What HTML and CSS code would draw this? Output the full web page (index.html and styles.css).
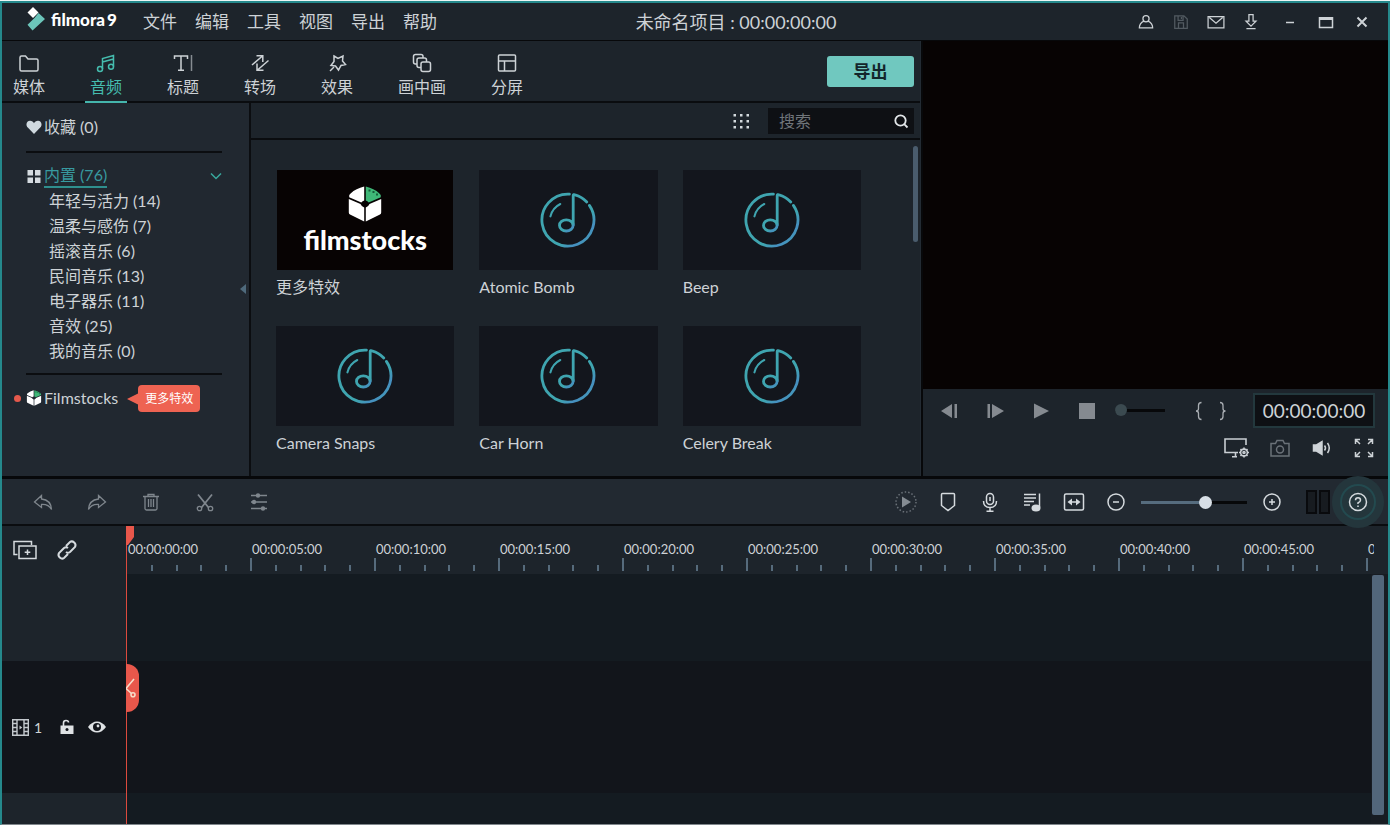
FILE: index.html
```html
<!DOCTYPE html>
<html lang="zh-CN">
<head>
<meta charset="utf-8">
<title>Filmora9</title>
<link rel="stylesheet" href="styles.css">
</head>
<body>
<svg class="sprite" aria-hidden="true">
  <defs>
    <linearGradient id="disc" x1="0" y1="0" x2="1" y2="1">
      <stop offset="0.65" stop-color="#3fa5b0"/><stop offset="0.8" stop-color="#468fc0"/><stop offset="1" stop-color="#3fa5b0"/>
    </linearGradient>
    <symbol id="note" viewBox="0 0 56 56">
      <g fill="none" stroke="url(#disc)" stroke-width="2.8" stroke-linecap="round">
        <path d="M49.4 13.4A26 26 0 1 1 29.4 2.1"/>
        <path d="M33.2 33V3.4Q33.2 2.2 35 2.9A26 26 0 0 1 46.8 10"/>
        <ellipse cx="26.3" cy="33.4" rx="6.8" ry="5.6"/>
        <path d="M20.3 12A19 19 0 0 0 10.4 24.4" stroke-width="2"/>
      </g>
    </symbol>
    <symbol id="cube" viewBox="0 0 34 36">
      <path d="M16.200.6V14.500Q14.500 15 13.300 16.500L1.200 11.300Q.6 8.600 2.600 7.400Q8 2.600 16.200.6Z" fill="#fff"/>
      <path d="M17.800.6V14.500Q19.500 15 20.700 16.500L32.800 11.300Q33.400 8.600 31.400 7.400Q26 2.600 17.800.6Z" fill="#3fb777"/>
      <path d="M20.500 3.500h2v2h-2zM24.500 5h2v2h-2zM28 7.500h2v2h-2z" fill="#155c39"/>
      <path d="M.8 13L12.500 18Q13.500 20.500 16.200 21.500V35.400L2 28.500Q.8 27.800.8 26.500ZM33.200 13L21.500 18Q20.500 20.500 17.800 21.500V35.400L32 28.500Q33.200 27.800 33.200 26.500Z" fill="#fff"/>
    </symbol>
  </defs>
</svg>

<div class="app">
  <header class="titlebar">
    <div class="brand">
      <svg width="20" height="26" viewBox="0 0 20 26"><path d="M6 1l5.500 5.500L6 12 .5 6.500z" fill="#fff"/><path d="M11.500 7l6.500 6L5.500 24.500 .5 18.800 7.500 12z" fill="#6cc5ba"/></svg>
      <span class="brand-name">filmora<span class="brand-nine">9</span></span>
    </div>
    <nav class="menu">
      <button>文件</button><button>编辑</button><button>工具</button><button>视图</button><button>导出</button><button>帮助</button>
    </nav>
    <h1 class="project">未命名项目 : 00:00:00:00</h1>
    <div class="account">
      <button aria-label="账户"><svg class="ic" viewBox="0 0 24 24"><circle cx="12" cy="8" r="3.700"/><path d="M9.500 11Q4 13.500 4 19H20Q20 13.500 14.500 11"/></svg></button>
      <button aria-label="保存" class="dim"><svg class="ic" viewBox="0 0 24 24"><path d="M4.500 4.500H15.500L19.500 8.500V19.500H4.500zM8.500 5V10H14.500V5M9 19V13H15V19M12.500 6V8.500"/></svg></button>
      <button aria-label="消息"><svg class="ic" viewBox="0 0 24 24"><path d="M2.500 5.500H21.500V19H2.500zM4 6.500l8 7 8-7"/></svg></button>
      <button aria-label="下载"><svg class="ic" viewBox="0 0 24 24"><path d="M9.500 3H14.500V11H18L12 17 6 11H9.500zM6.500 20H17.500"/></svg></button>
    </div>
    <div class="window-buttons">
      <button aria-label="最小化"><svg class="ic" viewBox="0 0 24 24"><path d="M8 12.500H16"/></svg></button>
      <button aria-label="最大化"><svg class="ic" viewBox="0 0 24 24"><path d="M5.500 7V17.500H18.500V7"/><path d="M5 8.500H19" stroke-width="3"/></svg></button>
      <button aria-label="关闭"><svg class="ic" viewBox="0 0 24 24"><path d="M7.500 7.500l9 9M16.500 7.500l-9 9" stroke-width="2"/></svg></button>
    </div>
  </header>

  <main class="workspace">
    <section class="library">
      <div class="tabs">
        <button class="tab"><svg class="ic" viewBox="0 0 24 24"><path d="M3 18V6.500Q3 5 4.500 5H8.500L11 8H19.500Q21 8 21 9.500V18.500Q21 20 19.500 20H4.500Q3 20 3 18.500z"/></svg>媒体</button>
        <button class="tab active"><svg class="ic" viewBox="0 0 24 24"><path d="M8.500 18V7.500L19.500 4.500V15.500M8.500 11L19.500 8"/><circle cx="6" cy="18" r="2.500"/><circle cx="17" cy="15.800" r="2.500"/></svg>音频</button>
        <button class="tab"><svg class="ic" viewBox="0 0 24 24"><path d="M3.500 8V5H16.500V8M10 5V19M7 19.200H13"/><path d="M20.500 4V20" opacity=".6"/></svg>标题</button>
        <button class="tab"><svg class="ic" viewBox="0 0 24 24"><path d="M4 14L14.500 5M8.500 4.800H14.800V11M20.500 9.500L9.500 19M9 12.500V19.200H15.500"/></svg>转场</button>
        <button class="tab"><svg class="ic" viewBox="0 0 24 24"><path d="M9 5l4 2.500L18 5l-.5 5 3 3.500-4.500 1-2.500 4.500-3-4-4.500-.5L9 10.500z"/><path d="M9 16l-4 4"/></svg>效果</button>
        <button class="tab"><svg class="ic" viewBox="0 0 24 24"><g fill="#1d242b"><rect x="3.500" y="3.500" width="9.500" height="9.500" rx="2"/><rect x="7" y="7" width="9.500" height="9.500" rx="2"/><rect x="11" y="11" width="9.500" height="9.500" rx="2"/></g></svg>画中画</button>
        <button class="tab"><svg class="ic" viewBox="0 0 24 24"><rect x="3.500" y="4" width="17" height="16" rx="1"/><path d="M3.500 10H20.500M9.500 10V20"/></svg>分屏</button>
        <button class="export">导出</button>
      </div>

      <div class="library-body">
        <aside class="sidebar">
          <a class="side-row favorites" href="#"><svg width="16" height="16" viewBox="0 0 16 16"><path d="M8 15L1.800 8.600C-1 5.500 1 1.800 4 1.800 6 1.800 7.300 3 8 4.200 8.700 3 10 1.800 12 1.800c3 0 5 3.700 2.200 6.800z" fill="#cfd9df"/></svg><span>收藏 (0)</span></a>
          <div class="side-group">
            <a class="side-row" href="#"><svg width="16" height="16" viewBox="0 0 16 16"><path d="M1.500 2H7v5.500H1.500zM9 2h5.500v5.500H9zM1.500 9.500H7V15H1.500zM9 9.500h5.500V15H9z" fill="#d5dbe0"/></svg><span class="current">内置 (76)</span>
            <svg class="chevron" width="12" height="8" viewBox="0 0 12 8"><path d="M1 1.500L6 6.500 11 1.500" fill="none" stroke="#38a89d" stroke-width="1.500"/></svg></a>
            <ul class="categories">
              <li><a href="#">年轻与活力 (14)</a></li>
              <li><a href="#">温柔与感伤 (7)</a></li>
              <li><a href="#">摇滚音乐 (6)</a></li>
              <li><a href="#">民间音乐 (13)</a></li>
              <li><a href="#">电子器乐 (11)</a></li>
              <li><a href="#">音效 (25)</a></li>
              <li><a href="#">我的音乐 (0)</a></li>
            </ul>
          </div>
          <a class="side-row stocks" href="#"><i class="dot"></i><svg width="16" height="16" viewBox="0 0 34 36"><use href="#cube"/></svg><span>Filmstocks</span><span class="tip">更多特效</span></a>
          <button class="collapse" aria-label="折叠"><svg width="6" height="10" viewBox="0 0 6 10"><path d="M6 0V10L0 5z" fill="#4f6a7c"/></svg></button>
        </aside>

        <div class="media">
          <div class="media-bar">
            <button aria-label="网格视图"><svg width="18" height="18" viewBox="0 0 18 18" fill="#d3d9dd"><path d="M1.500 2h2.500v2.500H1.500zM8 2h2.500v2.500H8zM14.500 2H17v2.500h-2.500zM1.500 8h2.500v2.500H1.500zM8 8h2.500v2.500H8zM14.500 8H17v2.500h-2.500zM1.500 14h2.500v2.500H1.500zM8 14h2.500v2.500H8zM14.500 14H17v2.500h-2.500z"/></svg></button>
            <label class="search"><input type="text" placeholder="搜索" aria-label="搜索"><svg width="16" height="16" viewBox="0 0 16 16" fill="none" stroke="#e3e7ea" stroke-width="1.800"><circle cx="7.500" cy="7.500" r="5.200"/><path d="M11.200 11.200L14.500 14.500"/></svg></label>
          </div>
          <div class="media-scroll">
            <div class="cards">
              <figure class="card"><div class="thumb promo"><svg width="34" height="36"><use href="#cube"/></svg><b>filmstocks</b></div><figcaption>更多特效</figcaption></figure>
              <figure class="card"><div class="thumb"><svg width="56" height="56"><use href="#note"/></svg></div><figcaption>Atomic Bomb</figcaption></figure>
              <figure class="card"><div class="thumb"><svg width="56" height="56"><use href="#note"/></svg></div><figcaption>Beep</figcaption></figure>
              <figure class="card"><div class="thumb"><svg width="56" height="56"><use href="#note"/></svg></div><figcaption>Camera Snaps</figcaption></figure>
              <figure class="card"><div class="thumb"><svg width="56" height="56"><use href="#note"/></svg></div><figcaption>Car Horn</figcaption></figure>
              <figure class="card"><div class="thumb"><svg width="56" height="56"><use href="#note"/></svg></div><figcaption>Celery Break</figcaption></figure>
            </div>
            <div class="scrollbar"></div>
          </div>
        </div>
      </div>
    </section>

    <section class="preview">
      <div class="screen"></div>
      <div class="controls">
        <div class="transport">
          <button aria-label="上一帧"><svg class="solid" viewBox="0 0 24 24"><path d="M15 5V19L4 12zM17.500 5H20V19H17.500z"/></svg></button>
          <button aria-label="下一帧"><svg class="solid" viewBox="0 0 24 24"><path d="M9 5V19L21 12zM4.500 5H7V19H4.500z"/></svg></button>
          <button aria-label="播放"><svg class="solid" viewBox="0 0 24 24"><path d="M5 4.500V19.500L20 12z"/></svg></button>
          <button aria-label="停止"><svg class="solid" viewBox="0 0 24 24"><path d="M4 4H20V20H4z"/></svg></button>
          <input class="seek" type="range" min="0" max="100" value="0" aria-label="播放位置">
          <div class="marks">
            <button aria-label="标记入点"><svg class="ic mark" viewBox="0 0 24 24"><path d="M14.500 3.500Q11.500 3.500 11.500 6.500V9.500Q11.500 12 9 12Q11.500 12 11.500 14.500V17.500Q11.500 20.500 14.500 20.500"/></svg></button>
            <button aria-label="标记出点"><svg class="ic mark" viewBox="0 0 24 24"><path d="M9 3.500Q12 3.500 12 6.500V9.500Q12 12 14.500 12Q12 12 12 14.500V17.500Q12 20.500 9 20.500"/></svg></button>
          </div>
          <output class="timecode">00:00:00:00</output>
        </div>
        <div class="view-tools">
          <button aria-label="预览质量"><svg width="26" height="24" viewBox="0 0 26 24" fill="none" stroke="#c9ced3" stroke-width="1.600"><path d="M22 9V3H1V16.500H14M11.500 16.500V20.500M8 20.700H13"/><circle cx="20" cy="16.500" r="3.400"/><circle cx="20" cy="16.500" r="1"/><path d="M20 11.500V13M20 20V21.500M15 16.500H16.500M23.500 16.500H25M16.500 13l1 1M22.500 19l1 1M23.500 13l-1 1M17.500 19l-1 1"/></svg></button>
          <button aria-label="快照" class="muted"><svg class="ic" viewBox="0 0 24 24"><path d="M3 7.500H7.500L9 4.500H15L16.500 7.500H21V20H3z"/><circle cx="12" cy="13.500" r="3.500"/></svg></button>
          <button aria-label="音量"><svg class="ic" viewBox="0 0 24 24"><path d="M3.500 9H6.500L12 5.500V18.500L6.500 15H3.500z" fill="#cfd4d8"/><path d="M14.500 9.500Q16.500 12 14.500 14.500M17.500 7Q21 12 17.500 17"/></svg></button>
          <button aria-label="全屏"><svg class="ic" viewBox="0 0 24 24"><path d="M8 3.500H3.500V8M4 4l4 4M16 3.500H20.500V8M20 4l-4 4M8 20.500H3.500V16M4 20l4-4M16 20.500H20.500V16M20 20l-4-4"/></svg></button>
        </div>
      </div>
    </section>
  </main>

  <div class="toolbar">
    <div class="edit-tools">
      <button aria-label="撤销"><svg class="ic" viewBox="0 0 24 24"><path d="M10.500 5.500L3.500 12l7 5.500V14.500Q17.500 14 20.500 19.500Q20 10 10.500 9z"/></svg></button>
      <button aria-label="重做"><svg class="ic" viewBox="0 0 24 24"><path d="M13.500 5.500L20.500 12l-7 5.500V14.500Q6.500 14 3.500 19.500Q4 10 13.500 9z"/></svg></button>
      <button aria-label="删除"><svg class="ic" viewBox="0 0 24 24"><path d="M4 6.500H20M9 6V4.500H15V6M6 7V18.500Q6 20 7.500 20H16.500Q18 20 18 18.500V7M9.500 9V17M12 9V17M14.500 9V17"/></svg></button>
      <button aria-label="剪切"><svg class="ic" viewBox="0 0 24 24"><path d="M5 4.500l10.500 13M19 4.500L8.500 17.500" stroke-width="1.800"/><circle cx="6.500" cy="18.500" r="2.200"/><circle cx="17.500" cy="18.500" r="2.200"/></svg></button>
      <button aria-label="调节"><svg class="ic" viewBox="0 0 24 24"><path d="M4 5.500H20M4 12H20M4 18.500H20"/><g fill="#7f868d" stroke="none"><circle cx="11" cy="5.500" r="2.200"/><circle cx="7" cy="12" r="2.200"/><circle cx="16" cy="18.500" r="2.200"/></g></svg></button>
    </div>
    <div class="timeline-tools">
      <button aria-label="渲染预览" class="muted"><svg class="ic" viewBox="0 0 24 24"><circle cx="12" cy="12" r="10" stroke-dasharray="1.500 2"/><path d="M8 6.500V17.500L17 12z" fill="#858c93" stroke="none"/></svg></button>
      <button aria-label="标记"><svg class="ic" viewBox="0 0 24 24"><path d="M6.500 3.500H17.500Q18.500 3.500 18.500 4.500V15.500L12 20.500 5.500 15.500V4.500Q5.500 3.500 6.500 3.500z"/></svg></button>
      <button aria-label="录音"><svg class="ic" viewBox="0 0 24 24"><rect x="8.500" y="3.500" width="7" height="11" rx="3.500"/><path d="M12 7V11M5.500 11Q5.500 17.500 12 17.500T18.500 11M12 17.500V21M8.500 21.200H15.500"/></svg></button>
      <button aria-label="音频混合"><svg class="ic" viewBox="0 0 24 24"><path d="M4 4.500H16M4 8H16M4 11.500H14M4 15H10"/><path d="M19.500 3.500V17.500"/><ellipse cx="16" cy="18" rx="4.500" ry="3.500" fill="#d5dade" stroke="none"/></svg></button>
      <button aria-label="适应时间线"><svg class="ic" viewBox="0 0 24 24"><rect x="2.500" y="4" width="19" height="16" rx="1.500"/><path d="M7 12H17"/><path d="M10 8.500V15.500L5.500 12zM14 8.500V15.500L18.500 12z" fill="#d5dade" stroke="none"/></svg></button>
      <button aria-label="缩小"><svg class="ic" viewBox="0 0 24 24"><circle cx="12" cy="12" r="8"/><path d="M9 12H15"/></svg></button>
      <input class="zoom" type="range" min="0" max="100" value="62" aria-label="时间线缩放">
      <button aria-label="放大"><svg class="ic" viewBox="0 0 24 24"><circle cx="12" cy="12" r="8"/><path d="M9 12H15M12 9V15"/></svg></button>
      <div class="meter"><i></i><i></i></div>
      <button aria-label="帮助" class="help"><svg class="ic" viewBox="0 0 24 24"><circle cx="12" cy="12" r="8.500"/><path d="M9.500 10.200Q9.500 7.800 12 7.800T14.500 10.200Q14.500 11.500 12 12.800V14M12 15.500V17"/></svg></button>
    </div>
  </div>

  <section class="timeline">
    <div class="ruler-head">
      <button aria-label="添加轨道"><svg class="ic" viewBox="0 0 26 24"><path d="M5.500 16.500H2V3.500H19.500V7"/><rect x="7" y="8" width="17" height="12.500"/><path d="M15.500 11.500V17M12.700 14.200H18.300"/></svg></button>
      <button aria-label="链接"><svg class="ic link" viewBox="0 0 24 24"><path d="M11 8l4-4Q17 2.500 19.200 4.500T20 9l-5 5Q13 15.500 11 14M13 16l-4 4Q7 21.500 4.800 19.500T4 15l5-5Q11 8.500 13 10"/></svg></button>
    </div>
    <div class="ruler">
      <div class="span"><span>00:00:00:00</span><i></i><i></i><i></i><i></i><i></i></div>
      <div class="span"><span>00:00:05:00</span><i></i><i></i><i></i><i></i><i></i></div>
      <div class="span"><span>00:00:10:00</span><i></i><i></i><i></i><i></i><i></i></div>
      <div class="span"><span>00:00:15:00</span><i></i><i></i><i></i><i></i><i></i></div>
      <div class="span"><span>00:00:20:00</span><i></i><i></i><i></i><i></i><i></i></div>
      <div class="span"><span>00:00:25:00</span><i></i><i></i><i></i><i></i><i></i></div>
      <div class="span"><span>00:00:30:00</span><i></i><i></i><i></i><i></i><i></i></div>
      <div class="span"><span>00:00:35:00</span><i></i><i></i><i></i><i></i><i></i></div>
      <div class="span"><span>00:00:40:00</span><i></i><i></i><i></i><i></i><i></i></div>
      <div class="span"><span>00:00:45:00</span><i></i><i></i><i></i><i></i><i></i></div>
      <div class="span"><span>00:00:50:00</span><i></i><i></i><i></i><i></i><i></i></div>
    </div>
    <div class="heads">
      <div class="blank-head"></div>
      <div class="track-head">
        <svg width="17" height="17" viewBox="0 0 17 17" fill="none" stroke="#c3c8cd" stroke-width="1.400"><path d="M.7.700H16.300V16.300H.7zM5 .7V16.300M12 .7V16.300M.7 4.500H5M.7 8.500H5M.7 12.500H5M12 4.500H16.300M12 8.500H16.300M12 12.500H16.300"/><path d="M7.500 6.500V10.500L10.300 8.500z" fill="#c3c8cd" stroke="none"/></svg>
        <span class="track-no">1</span>
        <button aria-label="锁定"><svg width="14" height="16" viewBox="0 0 14 16"><path d="M3.500 7V4Q3.500 1.500 6 1.500T8.500 3.500" fill="none" stroke="#dfe2e5" stroke-width="1.600"/><path d="M.5 6.500H13.500V15H.5z" fill="#dfe2e5"/><circle cx="7" cy="10.500" r="1.500" fill="#12151b"/></svg></button>
        <button aria-label="显示"><svg width="18" height="12" viewBox="0 0 18 12"><path d="M0 6Q4 .5 9 .5T18 6Q14 11.500 9 11.500T0 6z" fill="#dfe2e5"/><circle cx="9" cy="6" r="4" fill="#12151b"/><circle cx="10" cy="5" r="1.400" fill="#dfe2e5"/></svg></button>
      </div>
      <div class="blank-foot"></div>
    </div>
    <div class="lanes">
      <div class="lane-area">
        <div class="blank-head"></div>
        <div class="lane"></div>
        <div class="blank-foot"></div>
      </div>
      <div class="v-scroll"><div class="v-thumb"></div></div>
    </div>
    <div class="playhead">
      <svg class="playhead-flag" width="8" height="19" viewBox="0 0 8 19"><path d="M0 0H8V11L2 19H0z" fill="#e8574b"/></svg>
      <button class="split" aria-label="分割"><svg width="10" height="20" viewBox="0 0 10 20" fill="none" stroke="#f6dcc9" stroke-width="1.600"><path d="M8 1L0 10.500L5.500 15.500"/><circle cx="7" cy="16.800" r="2"/></svg></button>
    </div>
  </section>
</div>
</body>
</html>
```
FILE: styles.css
```css
* { box-sizing: border-box; }

body {
  margin: 0;
  background: #eef6f6;
  color: #cdd2d6;
  font: 16px/24px Lato, "Noto Sans CJK SC", sans-serif;
}

button {
  display: flex;
  align-items: center;
  justify-content: center;
  padding: 0;
  border: 0;
  background: none;
  color: inherit;
  font: inherit;
}

a { color: inherit; text-decoration: none; }
svg { flex: none; display: block; }
.sprite { position: absolute; width: 0; height: 0; }

.ic, .solid { width: 24px; height: 24px; }
.ic { fill: none; stroke: currentColor; stroke-width: 1.5; }
.solid { fill: #858a90; }

.app {
  display: flex;
  flex-direction: column;
  height: calc(100vh - 1px);
  margin-top: 1px;
  border: 2px solid #25898c;
  border-bottom: 1px solid #80878c;
  background: #07080a;
  overflow: hidden;
}

/* Title bar */
.titlebar {
  display: grid;
  grid-template-columns: auto 1fr auto auto;
  align-items: center;
  height: 38px;
  flex: none;
  border-bottom: 1px solid #07080a;
  background: #1d242b;
  position: relative;
}
.brand { display: flex; gap: 4px; width: 140px; padding-left: 25px; height: 32px; }
.brand-name { color: #fff; font-size: 17px; font-weight: 900; line-height: 28px; }
.brand-nine { margin-left: 2px; }
.menu { display: flex; gap: 18px; padding-left: 1px; font-size: 17px; }
.project {
  position: absolute;
  left: 0;
  right: 0;
  margin: 0 auto;
  width: max-content;
  padding-left: 82px;
  font-size: 18px;
  font-weight: 400;
}
.account, .window-buttons { display: flex; }
.account button { width: 35px; }
.account .ic { width: 20px; height: 20px; }
.account .dim { color: #525a61; }
.window-buttons { padding: 0 8px 0 4px; }
.window-buttons button { width: 36px; }

/* Workspace */
.workspace {
  display: grid;
  grid-template-columns: minmax(0, 1fr) 465px;
  gap: 2px;
  flex: 1;
  min-height: 0;
  margin-bottom: 3px;
}
.library { display: flex; flex-direction: column; min-height: 0; background: #1d242b; border-right: 1px solid #232b33; }
.tabs {
  display: flex;
  gap: 45px;
  height: 62px;
  flex: none;
  padding: 0 6px 0 11px;
  border-bottom: 2px solid #0a0c0f;
}
.tab { flex-direction: column; justify-content: flex-start; padding-top: 10px; position: relative; line-height: 24px; white-space: nowrap; }
.tab.active { color: #45bcae; }
.tab.active::after {
  content: "";
  position: absolute;
  left: -5px;
  right: -5px;
  bottom: -2px;
  height: 2px;
  background: #45b5ac;
}
.export {
  width: 87px;
  height: 31px;
  margin: 15px 0 0 auto;
  border-radius: 3px;
  background: #70c8bf;
  color: #13262b;
  font-size: 17px;
  font-weight: 700;
}
.library-body { display: flex; flex: 1; min-height: 0; }

/* Sidebar */
.sidebar {
  position: relative;
  width: 249px;
  flex: none;
  padding: 0 27px 0 24px;
  border-right: 2px solid #0b0d10;
  background: #212830;
}
.side-row { display: flex; align-items: center; gap: 2px; height: 25px; }
.favorites { height: 48px; }
.side-group { padding: 10px 0; border: solid #0b0d10; border-width: 2px 0; }
.current { color: #389aa0; border-bottom: 2px solid #2f8f8e; line-height: 23px; }
.chevron { margin-left: auto; }
.categories { margin: 0; padding: 0 0 0 23px; list-style: none; line-height: 25px; }
.stocks { height: 46px; position: relative; }
.dot { position: absolute; left: -12px; top: 20px; width: 7px; height: 7px; border-radius: 50%; background: #e5594c; }
.tip {
  position: relative;
  margin-left: 18px;
  padding: 0 7px;
  border-radius: 4px;
  background: #ee6352;
  color: #fff;
  font-size: 12px;
  line-height: 27px;
}
.tip::before {
  content: "";
  position: absolute;
  left: -11px;
  top: 8px;
  border: solid transparent;
  border-width: 6px 12px 6px 0;
  border-right-color: #ee6352;
}
.collapse { position: absolute; right: 3px; top: 181px; }

/* Media browser */
.media { display: flex; flex-direction: column; flex: 1; min-width: 0; }
.media-bar {
  display: flex;
  align-items: center;
  justify-content: flex-end;
  gap: 18px;
  height: 37px;
  flex: none;
  padding-right: 6px;
  border-bottom: 2px solid #0a0c0f;
}
.search { display: flex; align-items: center; width: 146px; height: 26px; padding: 0 5px 0 11px; background: #0e1014; }
.search input { flex: 1; width: 0; padding: 0; border: 0; outline: 0; background: none; color: #cdd2d6; font: inherit; }
.search input::placeholder { color: #70757a; opacity: 1; }
.media-scroll { display: flex; flex: 1; min-height: 0; overflow: hidden; }
.cards {
  display: grid;
  grid-template-columns: repeat(3, minmax(0, 1fr));
  align-content: start;
  gap: 22px 25px;
  flex: 1;
  padding: 30px 52px 0 25px;
}
.card { margin: 0; }
.thumb { display: flex; align-items: center; justify-content: center; height: 100px; background: #13161d; }
.promo { flex-direction: column; margin: 0 1px; background: #070303; color: #fff; font-size: 27px; line-height: 30px; gap: 3px; }
.promo b { font-weight: 900; }
.card figcaption { height: 34px; line-height: 34px; }
.scrollbar { width: 5px; height: 96px; margin: 6px 2px 0 0; border-radius: 3px; background: #4a5c6d; }

/* Preview */
.preview { display: flex; flex-direction: column; min-height: 0; }
.screen { flex: 1; background: #070303; }
.controls { height: 87px; flex: none; padding: 4px 12px 0 14px; background: #1d242b; }
.transport { display: flex; align-items: center; gap: 22px; height: 35px; }
.transport > * { flex: none; }
.marks { display: flex; color: #a8adb2; }
.mark { stroke-width: 1.3; }
.timecode {
  width: 122px;
  margin-left: auto;
  margin-right: 0;
  border: 2px solid #23383d;
  background: #0e1014;
  font-size: 19px;
  line-height: 31px;
  text-align: center;
}
.marks + .timecode { margin-left: -4px; }
.view-tools { display: flex; justify-content: flex-end; gap: 18px; height: 40px; }
.muted { color: #6a7178; }

input[type="range"] { appearance: none; height: 16px; margin: 0; background: none; }
.transport .seek { width: 50px; margin-left: -6px; }
.seek::-webkit-slider-runnable-track { height: 3px; background: #07080a; }
.seek::-webkit-slider-thumb { appearance: none; width: 12px; height: 12px; margin-top: -5px; border-radius: 50%; background: #3b4a50; }
.timeline-tools .zoom { width: 106px; margin: 0 -5px; }
.zoom::-webkit-slider-runnable-track { height: 3px; background: linear-gradient(90deg, #566c7e 60%, #07080a 60%); }
.zoom::-webkit-slider-thumb { appearance: none; width: 13px; height: 13px; margin-top: -5px; border-radius: 50%; background: #d8dfe6; }

/* Toolbar */
.toolbar {
  display: flex;
  justify-content: space-between;
  height: 47px;
  flex: none;
  padding: 0 18px 0 29px;
  border-bottom: 2px solid #0a0c0f;
  background: #222931;
}
.edit-tools, .timeline-tools { display: flex; align-items: center; padding-top: 1px; }
.edit-tools { gap: 30px; color: #7f868d; }
.edit-tools .ic { stroke-width: 1.3; }
.timeline-tools { gap: 18px; color: #d5dade; }
.timeline-tools .muted { color: #6a7178; }
.meter { display: flex; gap: 2px; margin: 0 -2px 0 4px; }
.meter i { width: 11px; height: 24px; border: 2px solid #090a0d; background: #171b20; }
.help {
  position: relative;
  z-index: 1;
  border-radius: 50%;
  background: #24363c;
  box-shadow: 0 0 0 4px #24363c, 0 0 0 6px #234a4f, 0 0 0 14px #24363c;
}

/* Timeline */
.timeline { display: grid; grid-template: 48px auto / 124px minmax(0, 1fr); flex: none; position: relative; }
.ruler-head { display: flex; align-items: center; gap: 17px; padding-left: 10px; background: #1d242b; color: #d5dade; }
.ruler-head button:first-child .ic { width: 26px; }
.link { stroke-width: 2; }
.ruler { display: flex; border-right: 14px solid #1d242b; background: #1d242b; overflow: hidden; }
.span {
  display: grid;
  grid-template: 32px 13px / repeat(5, 1fr);
  flex: none;
  width: 124px;
  align-items: end;
  font-size: 13px;
}
.span span { grid-column: 1 / -1; padding-left: 2px; line-height: 18px; }
.span i { height: 6px; border-left: 2px solid #566b7c; }
.span i:nth-of-type(1) { height: 13px; }
.span:first-child i:nth-of-type(1) { visibility: hidden; }
.blank-head { height: 87px; }
.blank-foot { height: 31px; }
.heads { background: #1d242b; }
.track-head { display: flex; align-items: center; height: 132px; padding-left: 10px; background: #12151b; }
.track-no { margin: 2px 18px 0 5px; font-size: 14px; }
.track-head button + button { margin-left: 14px; }
.lanes { display: flex; background: #141b21; }
.lane-area { flex: 1; }
.lane { height: 132px; background: #12151b; }
.v-scroll { width: 17px; padding: 1px 4px 9px 1px; background: #171c22; }
.v-thumb { height: 100%; border-radius: 2px; background: #52667a; }

.playhead { position: absolute; left: 124px; top: 0; bottom: 0; width: 1px; background: #dc4a3e; }
.playhead-flag { position: absolute; left: 0; top: 0; }
.split {
  position: absolute;
  left: 0;
  top: 138px;
  width: 13px;
  height: 48px;
  justify-content: flex-start;
  border-radius: 0 12px 12px 0;
  background: #e8574b;
}
```
